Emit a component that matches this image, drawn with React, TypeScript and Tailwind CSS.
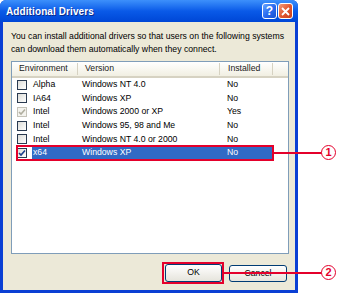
import React from "react";

type Row = { env: string; version: string; installed: string; checked: boolean; disabled?: boolean; selected?: boolean };

const ROWS: Row[] = [
  { env: "Alpha", version: "Windows NT 4.0", installed: "No", checked: false },
  { env: "IA64", version: "Windows XP", installed: "No", checked: false },
  { env: "Intel", version: "Windows 2000 or XP", installed: "Yes", checked: true, disabled: true },
  { env: "Intel", version: "Windows 95, 98 and Me", installed: "No", checked: false },
  { env: "Intel", version: "Windows NT 4.0 or 2000", installed: "No", checked: false },
  { env: "x64", version: "Windows XP", installed: "No", checked: true, selected: true },
];

function CheckBox({ checked, disabled }: { checked: boolean; disabled?: boolean }) {
  return (
    <div
      className={`w-[10px] h-[10px] border flex items-center justify-center ${
        disabled ? "border-[#c4c2b8] bg-[#f4f3ee]" : "border-[#2a3a50] bg-gradient-to-br from-[#dcdcd7] to-white"
      }`}
    >
      {checked && (
        <svg width="8" height="8" viewBox="0 0 8 8">
          <path
            d="M1 4l2 2 4-4.5"
            fill="none"
            stroke={disabled ? "#b0ae9f" : "#1b3f8c"}
            strokeWidth="1.6"
          />
        </svg>
      )}
    </div>
  );
}

function Circled({ n }: { n: string }) {
  return (
    <div className="w-[15px] h-[15px] rounded-full border-[1.5px] border-[#e4002b] bg-white flex items-center justify-center text-[#e4002b] text-[11px] font-bold leading-none">
      {n}
    </div>
  );
}

export default function App() {
  return (
    <div className="relative w-[339px] h-[294px] bg-white text-black" style={{ fontFamily: "'Liberation Sans', Arial, sans-serif" }}>
      <div className="w-[298px] h-[293px] flex flex-col rounded-t-[6px] overflow-hidden bg-[#0a3fd4]">
        {/* title bar */}
        <div className="h-[22px] flex items-center justify-between pl-[6px] pr-[5px] bg-gradient-to-b from-[#3d90fb] via-[#0a5ae8] to-[#0046d6]">
          <span className="text-white font-bold text-[10px] tracking-[0.1px] [text-shadow:1px_1px_0_#0a2a8a]">Additional Drivers</span>
          <div className="flex items-center gap-[1px]">
            <div className="w-[15px] h-[16px] rounded-[3px] border border-white bg-gradient-to-br from-[#6aa4ff] via-[#2a6cf0] to-[#1a4fd0] flex items-center justify-center text-white font-bold text-[12px] leading-none">
              ?
            </div>
            <div className="w-[15px] h-[16px] rounded-[3px] border border-white bg-gradient-to-br from-[#f09a7a] via-[#e2572e] to-[#c8401e] flex items-center justify-center">
              <svg width="9" height="9" viewBox="0 0 9 9">
                <path d="M1 1l7 7M8 1l-7 7" stroke="white" strokeWidth="1.8" />
              </svg>
            </div>
          </div>
        </div>

        {/* body */}
        <div className="flex-1 mx-[3px] mb-[3px] bg-[#ece9d8] flex flex-col px-[8px] text-[8.7px]">
          <p className="mt-[8px] leading-[13px] whitespace-nowrap">
            You can install additional drivers so that users on the following systems
            <br />
            can download them automatically when they connect.
          </p>

          <div className="mt-[5px] w-[278px] h-[193px] border border-[#7f9db9] bg-white flex flex-col">
            <div className="h-[16px] flex items-center bg-gradient-to-b from-white to-[#f1efe2] border-b-2 border-[#d6d2c2] text-[#1a1a1a]">
              <div className="w-[66px] h-[12px] pl-[7px] flex items-center border-r border-[#d6d2c2]">Environment</div>
              <div className="w-[142px] h-[12px] pl-[7px] flex items-center border-r border-[#d6d2c2]">Version</div>
              <div className="w-[53px] h-[12px] pl-[8px] flex items-center border-r border-[#d6d2c2]">Installed</div>
            </div>
            {ROWS.map((r, i) => (
              <div key={i} className="h-[13.6px] flex items-center">
                <div className="w-[20px] pl-[5px] flex items-center">
                  <CheckBox checked={r.checked} disabled={r.disabled} />
                </div>
                <div className={`flex items-center h-full w-[241px] ${r.selected ? "bg-[#316ac5] text-white" : ""}`}>
                  <div className="w-[50px] pl-[1px]">{r.env}</div>
                  <div className="w-[144px]">{r.version}</div>
                  <div className="pl-[1px]">{r.installed}</div>
                </div>
              </div>
            ))}
          </div>

          <div className="mt-[10px] flex justify-end gap-[7px] pr-[0px]">
            <button className="w-[57px] h-[18px] rounded-[3px] border border-[#003c74] bg-gradient-to-b from-white to-[#e6e4dc] text-[8.7px]">OK</button>
            <button className="w-[58px] h-[17px] mt-[1px] rounded-[3px] border border-[#003c74] bg-gradient-to-b from-white to-[#e6e4dc] text-[8.7px]">Cancel</button>
          </div>
        </div>
      </div>

      {/* annotations */}
      <div className="absolute left-[16px] top-[145px] w-[258px] h-[16px] border-2 border-[#e4002b]" />
      <div className="absolute left-[274px] top-[152px] w-[48px] h-[1.5px] bg-[#e4002b]" />
      <div className="absolute left-[321px] top-[145px]">
        <Circled n="1" />
      </div>

      <div className="absolute left-[162px] top-[262px] w-[62px] h-[22px] border-2 border-[#e4002b]" />
      <div className="absolute left-[224px] top-[272px] w-[98px] h-[1.5px] bg-[#e4002b]" />
      <div className="absolute left-[321px] top-[265px]">
        <Circled n="2" />
      </div>
    </div>
  );
}
